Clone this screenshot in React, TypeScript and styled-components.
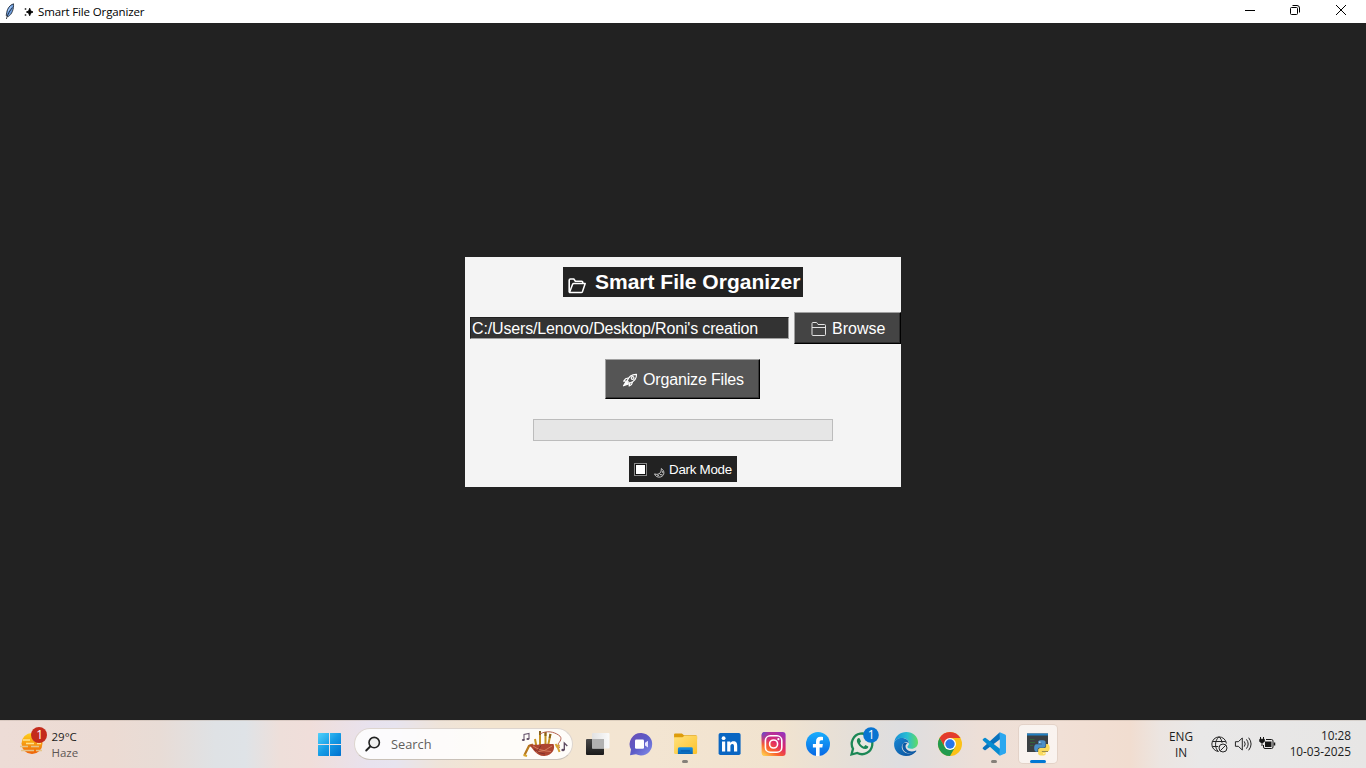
import React from "react";
import styled, { createGlobalStyle } from "styled-components";

const GlobalStyle = createGlobalStyle`
  * { box-sizing: border-box; }
  body { margin: 0; overflow: hidden; }
  svg { display: block; flex: none; overflow: visible; }
`;

const segoe = `"Open Sans", "Noto Sans", sans-serif`;
const arial = `"Liberation Sans", Arial, sans-serif`;

const Screen = styled.div`
  display: flex;
  flex-direction: column;
  width: 1366px;
  height: 768px;
  overflow: hidden;
  background: #222222;
`;

/* ---------- window ---------- */

const TitleBar = styled.header`
  display: flex;
  align-items: center;
  height: 23px;
  flex: none;
  padding-left: 4px;
  background: #ffffff;
`;

const WindowTitle = styled.span`
  margin-left: 4px;
  font: 11.5px/23px ${segoe};
  letter-spacing: -0.14px;
  color: #000;
  white-space: nowrap;
`;

const SparkSlot = styled.span`
  margin-left: 8px;
  margin-right: 1px;
`;

const WindowControls = styled.div`
  display: flex;
  margin-left: auto;
`;

const ControlButton = styled.button`
  display: flex;
  align-items: center;
  justify-content: center;
  width: 46px;
  height: 23px;
  padding: 0 4px 3px 0;
  border: 0;
  background: none;
`;

const Workspace = styled.main`
  display: flex;
  flex: 1;
  align-items: flex-start;
  justify-content: center;
  padding-top: 234px;
`;

const Panel = styled.section`
  display: flex;
  flex-direction: column;
  align-items: center;
  width: 436px;
  height: 230px;
  padding-top: 10px;
  background: #f4f4f4;
  font-family: ${arial};
  color: #fff;
`;

const Heading = styled.h1`
  display: flex;
  align-items: center;
  width: 240px;
  height: 30px;
  margin: 0;
  padding-left: 5px;
  gap: 9px;
  background: #222222;
  font: bold 21px/30px ${arial};
  white-space: nowrap;

  svg { margin-top: 7px; }
`;

const PathRow = styled.div`
  display: flex;
  align-items: center;
  align-self: stretch;
  margin-top: 15px;
  padding-left: 5px;
  gap: 5px;
`;

const PathInput = styled.input`
  width: 319px;
  height: 22px;
  padding: 2px 0 0 1px;
  border: 1px solid;
  border-color: #202020 #a0a0a0 #a0a0a0 #202020;
  border-radius: 0;
  outline: none;
  background: #333333;
  color: #fff;
  font: 16px/18px ${arial};
  letter-spacing: -0.155px;
`;

const PushButton = styled.button<{ $w: number; $h: number; $bg: string; $shade: string; $spacing?: number }>`
  display: flex;
  align-items: center;
  width: ${(p) => p.$w}px;
  height: ${(p) => p.$h}px;
  padding: 2px 0 0 16px;
  gap: 6px;
  border: 1px solid;
  border-color: #a0a0a0 #000 #000 #a0a0a0;
  border-radius: 0;
  box-shadow: inset -1px -1px 0 ${(p) => p.$shade};
  background: ${(p) => p.$bg};
  color: #fff;
  font: 16px/20px ${arial};
  letter-spacing: ${(p) => p.$spacing ?? 0}px;
  white-space: nowrap;
`;

const OrganizeRow = styled.div`
  margin: 15px 1px 0 0;
`;

const Progress = styled.div`
  width: 300px;
  height: 22px;
  margin-top: 20px;
  border: 1px solid #bcbcbc;
  background: #e6e6e6;
`;

const DarkToggle = styled.label`
  display: flex;
  align-items: center;
  width: 108px;
  height: 26px;
  margin-top: 15px;
  padding-left: 5px;
  background: #222222;
  font: 13.33px/26px ${arial};
  letter-spacing: -0.25px;
  white-space: nowrap;
`;

const ToggleText = styled.span`
  padding-top: 1px;
`;

const CheckBox = styled.span`
  width: 13px;
  height: 13px;
  margin-right: 7px;
  border: 1px solid #8a8a8a;
  box-shadow: inset 0 0 0 1px #111;
  background: #fff;
`;

const MoonSlot = styled.span`
  margin: 7px 4px 0 0;
`;

/* ---------- taskbar ---------- */

const Taskbar = styled.footer`
  display: flex;
  align-items: center;
  height: 48px;
  flex: none;
  box-shadow: inset 0 1px 0 rgba(180, 165, 155, 0.35);
  font-family: ${segoe};
  color: #1c1c1c;
  background: linear-gradient(
    90deg,
    #eddcd6 0, #ecdbd3 110px, #e8dcd6 160px, #dfe2e5 215px, #dfe3e7 245px,
    #eedfda 280px, #f0deda 310px, #e8e2ee 370px, #e7e4ef 395px, #efe4d9 440px,
    #f3e5d1 490px, #f3e5d2 650px, #f1e3cf 780px, #e5dfd8 850px, #dedee0 900px,
    #e2dedd 925px, #eddfd7 980px, #f1e0d6 1060px, #f1ddd0 1130px, #ece5e1 1160px,
    #e9e8e8 1200px, #e7e6e5 1366px
  );
`;

const Weather = styled.div`
  display: flex;
  width: 307.5px;
  height: 48px;
  padding: 7px 0 0 18px;
`;

const WeatherText = styled.div`
  display: flex;
  flex-direction: column;
  margin: 2px 0 0 3.5px;
  font-size: 11.5px;
  line-height: 16px;
`;

const Condition = styled.span`
  color: #5c5654;
`;

const Slot = styled.div<{ $active?: boolean }>`
  display: flex;
  align-items: center;
  justify-content: center;
  position: relative;
  width: ${(p) => (p.$active ? 38 : 44.1)}px;
  height: ${(p) => (p.$active ? 38 : 40)}px;
  margin: ${(p) => (p.$active ? "0 3px" : "0")};
  border-radius: 4px;
  background: ${(p) => (p.$active ? "rgba(255,255,255,.62)" : "none")};
  box-shadow: ${(p) => (p.$active ? "0 0 0 1px rgba(190,170,160,.25)" : "none")};
`;

const Indicator = styled.span<{ $active?: boolean }>`
  position: absolute;
  left: 50%;
  bottom: ${(p) => (p.$active ? 0 : 1)}px;
  width: ${(p) => (p.$active ? 16 : 6)}px;
  height: 3px;
  border-radius: 2px;
  transform: translateX(-50%);
  background: ${(p) => (p.$active ? "#0078d4" : "#858079")};
`;

const SearchBox = styled.div`
  display: flex;
  align-items: center;
  width: 219px;
  height: 32px;
  margin: 0 2px 0 2.4px;
  padding: 0 3px 0 10px;
  border: 1px solid #ddd5cf;
  border-bottom-color: #c9c1b8;
  border-radius: 16px;
  background: rgba(255, 255, 255, 0.86);
`;

const SearchLabel = styled.span`
  flex: 1;
  margin-left: 10px;
  font-size: 12.8px;
  line-height: 20px;
  color: #625f5c;
`;

const Tray = styled.div`
  display: flex;
  align-items: center;
  height: 48px;
  margin-left: auto;
  padding-right: 15px;
`;

const TrayText = styled.div<{ $align: string; $w: number; $lift?: number }>`
  width: ${(p) => p.$w}px;
  padding-bottom: ${(p) => p.$lift ?? 0}px;
  text-align: ${(p) => p.$align};
  font-size: 11.8px;
  line-height: 16px;
  letter-spacing: -0.02px;
  white-space: nowrap;
`;

const TrayIcons = styled.div`
  display: flex;
  align-items: center;
  gap: 7px;
  margin: 0 12px 0 16px;
`;

/* ---------- drawings ---------- */

const Feather = () => (
  <svg width="12" height="17" viewBox="0 0 12 17">
    <path d="M9.5.8C5.5 2 3.2 6 2.8 9.2l-.6 3.4 2 .9C8 11.5 9.9 6 9.5.8Z" fill="#6f9fe0" stroke="#26303c" strokeWidth=".9" />
    <path d="M8.5 4.5C6 7.5 3.5 11 2.4 16" fill="none" stroke="#10151c" strokeWidth=".8" />
    <path d="M7.2 3.2 4.2 8" stroke="#a9cbf5" strokeWidth="1" />
  </svg>
);

const Sparkles = () => (
  <svg width="9" height="10" viewBox="0 0 9 10">
    <path d="M5.7 1.3 6.7 3.9l2.300 1.100-2.300 1.100-1 2.600-1-2.600-2.300-1.100 2.300-1.100Z" fill="#000" stroke="#000" strokeWidth=".9" />
    <path d="M1.500 1v2M.5 2h2M1.500 7v2M.5 8h2" stroke="#555" strokeWidth="1" />
  </svg>
);

const OpenFolder = () => (
  <svg width="18" height="16" viewBox="0 0 18 16" fill="none" stroke="#fff" strokeLinejoin="round">
    <path d="M1.2 14.2V2.2Q1.2 1 2.4 1h3.4l1.6 2.200h6.200q1.200 0 1.200 1.200v1.300" strokeWidth="1.600" />
    <path d="m1.500 14.600 3-8q.4-1 1.300-1h11.400l-2.700 8q-.4 1-1.400 1Z" strokeWidth="1.500" />
  </svg>
);

const ClosedFolder = () => (
  <svg width="15" height="14" viewBox="-.5 0 15 14" fill="none" stroke="#e4e4e4" strokeWidth="1">
    <path d="M.5 12.500V1.500Q.5.5 1.500.5h3.200q.8 0 1.100.8l.7 1.200h6.500q1 0 1 1v9q0 1-1 1H1.500q-1 0-1-1ZM.5 5.500h13.500" />
  </svg>
);

const Rocket = () => (
  <svg width="15" height="15" viewBox="0 0 15 15" fill="none" stroke="#fff" strokeWidth="1.15" strokeLinejoin="round">
    <path d="M5.200 8C6.500 4 10 1.300 14.500 1.400c.2 4.100-2.200 7.200-6.700 8.700Z" />
    <path d="M6 5 3.700 5.700 1.700 8.200l3.500-.2M10.500 9 9.500 11.500l-2.400 1.500.5-2.800" />
    <circle cx="10.600" cy="5" r="1.400" />
    <path d="M4.200 8.300 1.500 12.800l5-1.900Z" fill="#fff" />
  </svg>
);

const Moon = () => (
  <svg width="11" height="10" viewBox="0 0 11 10" fill="none" stroke="#ddd" strokeWidth=".9">
    <path d="M7.300.6c3.700 2 3.500 7.300-.9 8.400C3.500 9.700 1 8 .6 5.900c2 .9 4.500.4 5.600-1.100C7.200 3.500 7.400 2 7.300.6Z" />
    <path d="m5.800 5.800 1 1.200 1.600-.5M3.200 7.100l1.700.6M8.400 3.200v1.600" />
  </svg>
);

const Haze = () => (
  <svg width="30" height="30" viewBox="0 0 30 30">
    <defs>
      <linearGradient id="sun" x1="0" y1="0" x2="0" y2="1">
        <stop stopColor="#ffd21c" />
        <stop offset="1" stopColor="#ee6208" />
      </linearGradient>
    </defs>
    <circle cx="14" cy="16.500" r="10.500" fill="url(#sun)" />
    <path d="M5 13h7m3 0h6M8 16.500h8m3 0h4" stroke="#ffe28b" strokeWidth="1.300" />
    <path d="M2 19.500h8m3 0h8M3 23.500h13m2 0h6" stroke="#e6c489" strokeWidth="1.600" />
    <circle cx="21" cy="8" r="8" fill="#c42b1c" />
    <text x="21.800" y="12.300" textAnchor="middle" fontSize="12" fill="#fff" fontFamily="Open Sans, sans-serif">1</text>
  </svg>
);

const WindowsLogo = () => (
  <svg width="24" height="24" viewBox="0 0 24 24">
    <defs>
      <linearGradient id="win" x1="0" y1="0" x2="1" y2="1">
        <stop stopColor="#50d1fb" />
        <stop offset=".5" stopColor="#159be5" />
        <stop offset="1" stopColor="#0070cf" />
      </linearGradient>
    </defs>
    <path fill="url(#win)" d="M.5 1H11v11H0V1.500ZM12 1h10.500l.5.500V12H12ZM0 13h11v11H.5l-.5-.5ZM12 13h11v10.500l-.5.5H12Z" />
  </svg>
);

const Magnifier = () => (
  <svg width="16" height="16" viewBox="0 0 16 16" fill="none" stroke="#222" strokeWidth="1.600" strokeLinecap="round">
    <circle cx="9.200" cy="6.600" r="5.200" fill="#f1f1f1" />
    <path d="m5.200 10.500-4 4" strokeWidth="1.900" />
  </svg>
);

const Bagpipes = () => (
  <svg width="48" height="28" viewBox="0 0 48 28" fill="none">
    <path d="M3 10V4.500l5-1V9" stroke="#6b5870" strokeWidth="1.100" />
    <ellipse cx="2.300" cy="10" rx="1.500" ry="1.100" fill="#5c4960" />
    <ellipse cx="6.900" cy="9" rx="1.500" ry="1.100" fill="#5c4960" />
    <path d="m12 14.500-4 1.500-4.500 9" stroke="#b7791e" strokeWidth="2.200" />
    <path d="m2.500 25 3.500 1" stroke="#d9a62b" strokeWidth="2" />
    <path d="M19 1v15M14 9l1.500 8M24.500 2v14M29.500 4l-2.500 12" stroke="#c69222" strokeWidth="2" />
    <path d="M19 1v4M24.500 2v4M29.400 4l-.8 4" stroke="#896019" strokeWidth="2" />
    <path d="M19 4c7-4 14-2 18.500 1 5 3 1 7-.5 9l1.500 4" stroke="#b4604e" strokeWidth="1" />
    <path d="M8 15c4-1.500 7 .5 10-.5 5-1.500 10-.5 14.500-.5 2 5-1 11-9 12-8 .5-11-7-15.500-11Z" fill="#ad4430" />
    <path d="M12 16q7 5 18 5.500M15 22q9 0 16-6" stroke="#dc8968" strokeWidth=".8" />
    <path d="M13 19q5 5 11 5M20 15.500l-3 5" stroke="#762c2b" strokeWidth=".8" />
    <path d="m34.500 14 2.500 4 1.500 4M35 17l3.500-2" stroke="#d6a332" strokeWidth="2" />
    <path d="M43.300 20v-7l3 3" stroke="#5c4960" strokeWidth="1.300" />
    <ellipse cx="42" cy="20" rx="1.700" ry="1.300" fill="#5c4960" />
  </svg>
);

const TaskView = () => (
  <svg width="24" height="24" viewBox="0 0 24 24">
    <defs>
      <linearGradient id="tvDark" x1="0" y1="0" x2="0" y2="1">
        <stop stopColor="#4a4a4a" />
        <stop offset="1" stopColor="#1a1a1a" />
      </linearGradient>
      <linearGradient id="tvLight" x1="0" y1="0" x2="1" y2="0">
        <stop stopColor="#e2e2e2" />
        <stop offset="1" stopColor="#fafafa" />
      </linearGradient>
    </defs>
    <rect x="1" y="7" width="18" height="16" rx="1" fill="url(#tvDark)" />
    <rect x="7" y="1" width="17.500" height="15.500" rx="1" fill="url(#tvLight)" />
    <path d="M7 7h12v9.500H7Z" fill="#b2b2b2" />
  </svg>
);

const Chat = () => (
  <svg width="24" height="24" viewBox="0 0 24 24">
    <defs>
      <linearGradient id="chat" x1="0" y1="0" x2="1" y2="1">
        <stop stopColor="#6c4eb5" />
        <stop offset=".5" stopColor="#5c5bc7" />
        <stop offset="1" stopColor="#8490ec" />
      </linearGradient>
    </defs>
    <path d="M12.500 1A11.200 11.200 0 1 1 7 22.200L1 23.300l1-5.800A11.200 11.200 0 0 1 12.500 1Z" fill="url(#chat)" />
    <rect x="6" y="7.500" width="9" height="9.200" rx="1.200" fill="#fff" />
    <path d="m16 10.800 3-2v6.700l-3-2Z" fill="#e4e2ff" />
  </svg>
);

const Explorer = () => (
  <svg width="24" height="24" viewBox="-.6 0 25 24">
    <defs>
      <linearGradient id="fold" x1="0" y1="0" x2="1" y2="1">
        <stop stopColor="#ffe17c" />
        <stop offset="1" stopColor="#fcc22a" />
      </linearGradient>
      <linearGradient id="foldBlue" x1="0" y1="0" x2="0" y2="1">
        <stop stopColor="#1591e4" />
        <stop offset="1" stopColor="#0765b6" />
      </linearGradient>
    </defs>
    <path d="M.5 6V2Q.5 1 1.500 1h7.200l2.100 2H23q1 0 1.500 1v3Z" fill="#dd9c0c" />
    <path d="M.5 5h8.800l2-1.700h12.200q1 0 1 1V21q0 1.500-1.500 1.500H2Q.5 22.500.5 21Z" fill="url(#fold)" />
    <path d="M4.500 22.500V17Q4.500 15.500 6.500 15.500h12Q20 15.500 20 17v5.500Z" fill="url(#foldBlue)" />
    <path d="M7.500 19.200H17" stroke="#0858a8" strokeWidth="1.200" />
  </svg>
);

const LinkedIn = () => (
  <svg width="22" height="22" viewBox="-.6 0 22 22">
    <rect width="22" height="22" rx="1.800" fill="#0a66c2" />
    <circle cx="5" cy="5.200" r="1.900" fill="#fff" />
    <path d="M3.400 8.600h3.200v9.800H3.400ZM8.600 8.600h3.100v1.300c.6-1 1.700-1.600 3.100-1.600 3 0 3.800 1.800 3.800 4.600v5.500h-3.200v-4.900c0-1.400-.2-2.500-1.600-2.500-1.500 0-2 1-2 2.500v4.900H8.600Z" fill="#fff" />
  </svg>
);

const Instagram = () => (
  <svg width="24" height="24" viewBox="-.6 0 24 24">
    <defs>
      <linearGradient id="ig" x1=".15" y1="1" x2=".85" y2="0">
        <stop stopColor="#ffc94b" />
        <stop offset=".28" stopColor="#f9612e" />
        <stop offset=".58" stopColor="#df2868" />
        <stop offset="1" stopColor="#9632bd" />
      </linearGradient>
      <radialGradient id="igBlue" cx="0" cy="0" r=".55">
        <stop stopColor="#5254d4" />
        <stop offset="1" stopColor="#a732bd" stopOpacity="0" />
      </radialGradient>
    </defs>
    <rect width="24" height="24" rx="3" fill="url(#ig)" />
    <rect width="24" height="24" rx="3" fill="url(#igBlue)" />
    <rect x="3.800" y="3.800" width="16.400" height="16.400" rx="4.800" fill="none" stroke="#fff" strokeWidth="1.600" />
    <circle cx="12" cy="12" r="4" fill="none" stroke="#fff" strokeWidth="1.600" />
    <circle cx="16.800" cy="7.200" r="1.100" fill="#fff" />
  </svg>
);

const Facebook = () => (
  <svg width="24" height="24" viewBox="0 0 24 24">
    <defs>
      <linearGradient id="fb" x1="0" y1="0" x2="0" y2="1">
        <stop stopColor="#19aefd" />
        <stop offset="1" stopColor="#0868e4" />
      </linearGradient>
    </defs>
    <circle cx="12" cy="12" r="12" fill="url(#fb)" />
    <path d="M10 24v-8.400H6.900V12H10V9.800c0-3.200 1.500-5 4.600-5 1 0 1.900.1 2.400.3v3.100h-1.700c-1.300 0-1.700.7-1.700 2V12h3.300l-.6 3.600h-2.700V24Z" fill="#fff" />
  </svg>
);

const WhatsApp = () => (
  <svg width="24" height="24" viewBox="0 0 24 24">
    <path d="M1.500 22.500 3 16.800A10.300 10.300 0 1 1 7.300 21Z" fill="#e8e7e0" stroke="#1b8755" strokeWidth="2.300" />
    <path d="M8.300 6.100c-1.600 1-2 3-.6 5.400 1.800 3.300 5 5.700 8 5.600 1.600-.1 2.700-1.200 2.600-2.600L15.400 13l-1.500 1.700c-1.800-.7-3.200-2-4-3.700l1.100-1.400-1.200-3.200Z" fill="#1b8755" />
    <circle cx="21" cy="3" r="7.800" fill="#0874d1" />
    <text x="21.300" y="7.300" textAnchor="middle" fontSize="12" fill="#fff" fontFamily="Open Sans, sans-serif">1</text>
  </svg>
);

const Edge = () => (
  <svg width="24" height="24" viewBox="0 0 24 24">
    <defs>
      <linearGradient id="edTop" x1="0" y1=".4" x2="1" y2=".4">
        <stop stopColor="#168ed6" />
        <stop offset=".55" stopColor="#29bed3" />
        <stop offset="1" stopColor="#61db62" />
      </linearGradient>
      <linearGradient id="edBlue" x1="0" y1="0" x2="1" y2="1">
        <stop stopColor="#1686d4" />
        <stop offset="1" stopColor="#0b4d97" />
      </linearGradient>
    </defs>
    <path d="M.2 11C1 3.500 6.500 0 12.300 0 19 0 24 4.500 24 10.200c0 4.200-3.100 6.500-6.500 6.500-2.800 0-4.100-1-4.100-2 0-.8 1.500-1.200 1.500-3.500C14.900 7.700 11 5.800 7.300 6 3.400 6.200.8 8.500.2 11Z" fill="url(#edTop)" />
    <path d="M.1 11.500C.5 8 4.200 6 7.600 6c4.200 0 7.200 2.400 7.200 5.200-1.400-1.400-4.700-1.200-6.200 1-2.700 4.100 1.500 9.300 6 9.300 3.200 0 5.400-.8 7.400-2.200C19.900 22.200 16.500 24 12.100 24 5.300 24-.4 18.700.1 11.500Z" fill="url(#edBlue)" />
    <path d="M9 11.700c-2 4.200 1.500 9.700 6.800 9.900 2.600.1 4.700-.8 6.300-2.200.5-.6 0-1-.7-.7-5.500 2.200-10-1-9.900-4.700.1-1.100.8-2.100 1.900-2.500-1.700-1-3.700-.8-4.400.2Z" fill="#0c5aa4" />
  </svg>
);

const Chrome = () => (
  <svg width="24" height="24" viewBox="0 0 24 24">
    <circle cx="12" cy="12" r="12" fill="#fbc116" />
    <path d="M1.600 6A12 12 0 0 1 22.400 6H12L6.800 15Z" fill="#e33b2e" />
    <path d="M1.600 6A12 12 0 0 0 12 24l5.200-9L12 18l-5.200-3Z" fill="#229a4e" />
    <circle cx="12" cy="12" r="6" fill="#fff" />
    <circle cx="12" cy="12" r="4.700" fill="#2876e8" />
  </svg>
);

const VSCode = () => (
  <svg width="24" height="24" viewBox="0 0 24 24">
    <path d="M17.800.2 1 15.500q-.8.700 0 1.400l1.400 1.200q.6.500 1.300 0L18 7.200Z" fill="#0872bd" />
    <path d="M17.800 23.800 1 8.500q-.8-.7 0-1.400l1.400-1.200q.6-.5 1.300 0L18 16.800Z" fill="#078bd0" />
    <path d="m17.800.2 5.300 2.200q.9.400.9 1.400v16.400q0 1-.9 1.400l-5.300 2.200V.2Z" fill="#2ba7ef" />
  </svg>
);

const snake =
  "M14.25.18l.9.2.73.26.59.3.45.32.34.34.25.34.16.33.1.3.04.26.02.2-.01.13V8.5l-.05.63-.13.55-.21.46-.26.38-.3.31-.33.25-.35.19-.35.14-.33.1-.3.07-.26.04-.21.02H8.77l-.69.05-.59.14-.5.22-.41.27-.33.32-.27.35-.2.36-.15.37-.1.35-.07.32-.04.27-.02.21v3.06H3.17l-.21-.03-.28-.07-.32-.12-.35-.18-.36-.26-.36-.36-.35-.46-.32-.59-.28-.73-.21-.88-.14-1.05-.05-1.23.06-1.22.16-1.04.24-.87.32-.71.36-.57.4-.44.42-.33.42-.24.4-.16.36-.1.32-.05.24-.01h.16l.06.01h8.16v-.83H6.18l-.01-2.75-.02-.37.05-.34.11-.31.17-.28.25-.26.31-.23.38-.2.44-.18.51-.15.58-.12.64-.1.71-.06.77-.04.84-.02 1.27.05z";

const PythonConsole = () => (
  <svg width="24" height="24" viewBox="0 0 24 24">
    <path d="M1 1.500h21V20H1Z" fill="#3b4043" />
    <path d="M1 1.500h21v2H1Z" fill="#2280c3" />
    <path d="M4 7.500h4.500M4 10.500h5M4 13.500h3" stroke="#34653a" strokeWidth="1" />
    <g transform="translate(8.200 8.200) scale(.64)">
      <path d={snake} fill="#4a8fc7" />
      <path d={snake} fill="#f9da5c" transform="rotate(180 12 12)" />
      <circle cx="8.800" cy="3.100" r="1" fill="#fff" />
      <circle cx="15.200" cy="20.900" r="1" fill="#fff" />
    </g>
  </svg>
);

const GlobeOff = () => (
  <svg width="17" height="17" viewBox="0 0 17 17" fill="none" stroke="#252525" strokeWidth="1">
    <path d="M7.500 15.500A7.300 7.300 0 1 1 15.400 7.500M7.300 15.400C3.500 12 3.500 4.400 8 .8c1.800 1.500 2.800 3.500 3 6M1.300 5.500h13.400M1.300 10.500h6" />
    <circle cx="12" cy="12" r="4" />
    <path d="m9.300 14.700 5.400-5.400" />
  </svg>
);

const Volume = () => (
  <svg width="17" height="16" viewBox="0 0 17 16" fill="none" stroke="#252525" strokeWidth="1" strokeLinecap="round" strokeLinejoin="round">
    <path d="M.8 5.700h2.500l4-3.700v12l-4-3.700H.8Z" />
    <path d="M9.500 5.700q1.700 2.300 0 4.600M11.700 3.700q3.200 4.300 0 8.600M13.900 2q4.600 6 0 12" />
  </svg>
);

const Battery = () => (
  <svg width="17" height="16" viewBox="0 0 17 16" fill="none" stroke="#161616">
    <path d="M7 3.500h5.500q1.500 0 1.500 1.500v6q0 1.500-1.500 1.500H6q-1.500 0-1.500-1.500V9" strokeWidth="1" />
    <path d="M6 5.500h6.500v5.500H6Z" fill="#161616" stroke="none" />
    <path d="M15.500 6.500v3" strokeWidth="1.500" />
    <path d="M1.500 1v3M4.500 1v3M3 6v4" strokeWidth="1" />
    <path d="M.8 3.300h4.500v2Q5 6.500 3 6.500T.8 5.300Z" fill="#161616" />
  </svg>
);

const pinned = [
  { name: "Task View", Icon: TaskView },
  { name: "Chat", Icon: Chat },
  { name: "File Explorer", Icon: Explorer, running: true },
  { name: "LinkedIn", Icon: LinkedIn },
  { name: "Instagram", Icon: Instagram },
  { name: "Facebook", Icon: Facebook },
  { name: "WhatsApp", Icon: WhatsApp },
  { name: "Edge", Icon: Edge },
  { name: "Chrome", Icon: Chrome },
  { name: "VS Code", Icon: VSCode, running: true },
  { name: "Python", Icon: PythonConsole, running: true, active: true },
];

export default function App() {
  return (
    <Screen>
      <GlobalStyle />
      <TitleBar>
        <Feather />
        <SparkSlot><Sparkles /></SparkSlot>
        <WindowTitle>Smart File Organizer</WindowTitle>
        <WindowControls>
          <ControlButton>
            <svg width="10" height="10"><path d="M1 5.500h10" stroke="#000" /></svg>
          </ControlButton>
          <ControlButton>
            <svg width="10" height="10" fill="none" stroke="#000">
              <rect x=".5" y="2.500" width="7" height="7" rx="1" />
              <path d="M2.500.5H7q2.500 0 2.500 2.500v4.500" />
            </svg>
          </ControlButton>
          <ControlButton>
            <svg width="10" height="10"><path d="m0 0 10 10M10 0 0 10" stroke="#000" strokeWidth="1" /></svg>
          </ControlButton>
        </WindowControls>
      </TitleBar>

      <Workspace>
        <Panel>
          <Heading><OpenFolder />Smart File Organizer</Heading>
          <PathRow>
            <PathInput readOnly value="C:/Users/Lenovo/Desktop/Roni's creation" />
            <PushButton $w={107} $h={32} $bg="#444444" $shade="#2c2c2c">
              <ClosedFolder />Browse
            </PushButton>
          </PathRow>
          <OrganizeRow>
            <PushButton $w={155} $h={40} $bg="#555555" $shade="#363636" $spacing={-0.16}>
              <Rocket />Organize Files
            </PushButton>
          </OrganizeRow>
          <Progress />
          <DarkToggle>
            <CheckBox />
            <MoonSlot><Moon /></MoonSlot>
            <ToggleText>Dark Mode</ToggleText>
          </DarkToggle>
        </Panel>
      </Workspace>

      <Taskbar>
        <Weather>
          <Haze />
          <WeatherText>
            <span>29°C</span>
            <Condition>Haze</Condition>
          </WeatherText>
        </Weather>
        <Slot><WindowsLogo /></Slot>
        <SearchBox>
          <Magnifier />
          <SearchLabel>Search</SearchLabel>
          <Bagpipes />
        </SearchBox>
        {pinned.map(({ name, Icon, running, active }) => (
          <Slot key={name} $active={active}>
            <Icon />
            {running && <Indicator $active={active} />}
          </Slot>
        ))}
        <Tray>
          <TrayText $align="center" $w={28}>ENG<br />IN</TrayText>
          <TrayIcons>
            <GlobeOff />
            <Volume />
            <Battery />
          </TrayIcons>
          <TrayText $align="right" $w={63} $lift={2}>10:28<br />10-03-2025</TrayText>
        </Tray>
      </Taskbar>
    </Screen>
  );
}
